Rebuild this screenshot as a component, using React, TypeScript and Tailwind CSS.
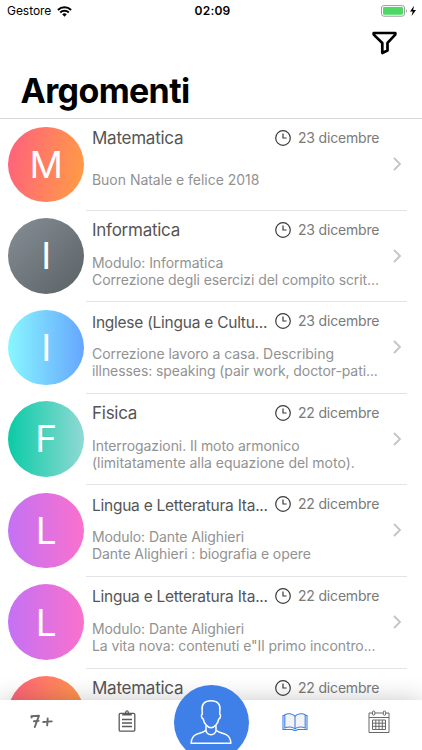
import { clsx } from "clsx";

interface Topic {
  title: string;
  titleClass: string;
  date: string;
  lines: { text: string; tracking: string }[];
  gradient: string;
}

const BIG_TITLE = "text-[17px] tracking-[-0.25px]";
const SMALL_TITLE = "text-[15.5px] tracking-[-0.25px]";

const TOPICS: Topic[] = [
  {
    title: "Matematica",
    titleClass: BIG_TITLE,
    date: "23 dicembre",
    lines: [{ text: "Buon Natale e felice 2018", tracking: "tracking-[-0.03px]" }],
    gradient: "bg-linear-[100deg,#ff5f7e,#ff9f43]",
  },
  {
    title: "Informatica",
    titleClass: BIG_TITLE,
    date: "23 dicembre",
    lines: [
      { text: "Modulo: Informatica", tracking: "tracking-[-0.06px]" },
      { text: "Correzione degli esercizi del compito scrit...", tracking: "tracking-[-0.08px]" },
    ],
    gradient: "bg-linear-[135deg,#868f96,#596164]",
  },
  {
    title: "Inglese (Lingua e Cultu...",
    titleClass: SMALL_TITLE,
    date: "23 dicembre",
    lines: [
      { text: "Correzione lavoro a casa. Describing", tracking: "tracking-[-0.05px]" },
      { text: "illnesses: speaking (pair work, doctor-pati...", tracking: "tracking-[-0.08px]" },
    ],
    gradient: "bg-linear-[90deg,#89f7fe,#66a6ff]",
  },
  {
    title: "Fisica",
    titleClass: BIG_TITLE,
    date: "22 dicembre",
    lines: [
      { text: "Interrogazioni. Il moto armonico", tracking: "tracking-[-0.07px]" },
      { text: "(limitatamente alla equazione del moto).", tracking: "tracking-[-0.02px]" },
    ],
    gradient: "bg-linear-[90deg,#0acba6,#90d9d4]",
  },
  {
    title: "Lingua e Letteratura Ita...",
    titleClass: SMALL_TITLE,
    date: "22 dicembre",
    lines: [
      { text: "Modulo: Dante Alighieri", tracking: "tracking-[-0.09px]" },
      { text: "Dante Alighieri : biografia e opere", tracking: "tracking-[-0.07px]" },
    ],
    gradient: "bg-linear-[90deg,#c471f5,#fa71cd]",
  },
  {
    title: "Lingua e Letteratura Ita...",
    titleClass: SMALL_TITLE,
    date: "22 dicembre",
    lines: [
      { text: "Modulo: Dante Alighieri", tracking: "tracking-[-0.09px]" },
      { text: "La vita nova: contenuti e\"Il primo incontro...", tracking: "tracking-[-0.08px]" },
    ],
    gradient: "bg-linear-[90deg,#c471f5,#fa71cd]",
  },
  {
    title: "Matematica",
    titleClass: BIG_TITLE,
    date: "22 dicembre",
    lines: [],
    gradient: "bg-linear-[100deg,#ff5f7e,#ff9f43]",
  },
];

function ClockIcon() {
  return (
    <svg className="shrink-0" width="16" height="16" viewBox="0 0 16 16" fill="none" stroke="#3a3a3c" strokeWidth="1.2">
      <circle cx="8" cy="8" r="7.3" />
      <path d="M8 3.4V8h3.6" />
    </svg>
  );
}

function StatusBar() {
  return (
    <div className="h-[22px] flex items-center text-black">
      <div className="flex-1 flex items-center gap-[6px] pl-[7px]">
        <span className="text-[12px] tracking-[-0.05px]">Gestore</span>
        <svg width="15" height="11" viewBox="0 0 15 11" fill="none" stroke="#000" strokeWidth="1.9">
          <path d="M0.9 4a9.4 9.4 0 0 1 13.2 0" />
          <path d="M3.2 6.5a6.1 6.1 0 0 1 8.6 0" />
          <path d="M7.5 10.7L5.2 8.3a3.3 3.3 0 0 1 4.6 0z" fill="#000" stroke="none" />
        </svg>
      </div>
      <span className="pl-[1px] text-[12px] font-semibold tracking-[0.2px]">02:09</span>
      <div className="flex-1 flex items-center justify-end pr-[5px]">
        <svg width="36" height="12" viewBox="0 0 36 12">
          <rect x="0.5" y="0.6" width="23" height="10.6" rx="2.4" fill="none" stroke="#9b9b9b" />
          <rect x="2" y="2.1" width="20" height="7.6" rx="1.2" fill="#4cd964" />
          <path d="M25 4.2c1.2.5 1.2 3 0 3.5z" fill="#9b9b9b" />
          <path d="M33 0.8L29 6.6h2.7L30.6 11l4.4-5.9h-2.8z" fill="#000" />
        </svg>
      </div>
    </div>
  );
}

function TopicRow({ topic }: { topic: Topic }) {
  return (
    <div className="h-[91.6px] shrink-0 flex pl-[8.3px]">
      <div
        className={clsx(
          "mt-[7.5px] size-[75.6px] rounded-full flex items-center justify-center text-white text-[37px] shrink-0",
          topic.gradient,
        )}
      >
        {topic.title[0]}
      </div>
      <div className="ml-[2.6px] w-[321px] shrink-0 flex border-b border-[#e4e4e6] pl-[5.5px]">
        <div className="w-[288px] shrink-0 flex flex-col">
          <div className="mt-[8px] h-[22px] flex items-center">
            <span className={clsx("w-[183px] shrink-0 pt-[2px] whitespace-nowrap text-[#555]", topic.titleClass)}>
              {topic.title}
            </span>
            <span className="flex items-center gap-[7px] text-[14px] tracking-[-0.18px] text-[#7a7a7a]">
              <ClockIcon />
              <span className="whitespace-nowrap pb-[1px]">{topic.date}</span>
            </span>
          </div>
          <div className="mt-[13px] h-[34px] flex flex-col justify-center text-[14px] leading-[17px] text-[#929292]">
            {topic.lines.map((line) => (
              <span key={line.text} className={clsx("whitespace-nowrap", line.tracking)}>
                {line.text}
              </span>
            ))}
          </div>
        </div>
        <svg className="ml-[13px] mt-[38px]" width="9" height="14" viewBox="0 0 9 14" fill="none" stroke="#c4c4c8" strokeWidth="1.8">
          <path d="M1 1l6 6-6 6" />
        </svg>
      </div>
    </div>
  );
}

function TabBar() {
  return (
    <div className="relative h-[50px] shrink-0 bg-white shadow-[0_0_24px_rgba(0,0,0,0.22)] grid grid-cols-5 justify-items-center">
      <svg className="mt-[14px]" width="24" height="16" viewBox="0 0 24 16" fill="none" stroke="#686868" strokeWidth="1.9" strokeLinecap="round" strokeLinejoin="round">
        <path d="M1.4 2.2l.2 1.4M1.4 2.3L9 1.7 4.8 13M4 7.3l4.600-.4M13.200 8l8.600-.6M17.700 4.400l-.5 7" />
      </svg>
      <svg className="mt-[10px]" width="18" height="22" viewBox="0 0 18 22" fill="none" stroke="#5a5a5a" strokeWidth="1.3">
        <rect x="1.2" y="3.4" width="15.6" height="17.8" rx="1.2" />
        <path
          d="M4.2 5.400V3.100h2.700C7.100 1.300 8 .3 9 .3s1.900 1 2.100 2.800h2.700v2.300zM9 1.500a.8.8 0 1 0 0 1.600.8.8 0 0 0 0-1.600z"
          fill="#5a5a5a"
          fillRule="evenodd"
          stroke="none"
        />
        <path d="M4 9.500h10M4 13h10M4 16.500h10" strokeWidth="1.5" />
      </svg>
      <svg className="col-start-4 mt-[13px] mr-[1px]" width="26" height="19" viewBox="0 0 26 19" fill="none" stroke="#3f7fe8" strokeWidth="1.1">
        <path d="M2.800 1.700C5 .2 11 .3 13 3.400 15 .3 21 .2 23.200 1.700V15H2.800z" fill="#f3f3f3" stroke="none" />
        <path d="M13 3.400C11 .3 5 .2 2.800 1.700V15c3-1.400 8-1.400 10.200 1 2.200-2.400 7.200-2.400 10.200-1V1.700C21 .2 15 .3 13 3.400V16M2.800 2.500H1v14h9.500c.6 1.300 4.400 1.300 5 0H25v-14h-1.800" />
      </svg>
      <svg className="mt-[10px] mr-[2px]" width="22" height="24" viewBox="0 0 22 24" fill="none" stroke="#686868" strokeWidth="1">
        <path d="M4.300 3H1v19.500h20V3h-3.200M7 3h8.200M1 7.500h20" />
        <rect x="4.500" y="1" width="2.300" height="4.200" rx="1.100" />
        <rect x="15.300" y="1" width="2.300" height="4.200" rx="1.100" />
        <path d="M4.500 10h13v9.500h-13zM4.500 13.200h13M4.500 16.300h13M7.800 10v9.500M11 10v9.500M14.300 10v9.500" />
      </svg>
      {/* profile button rises above the bar and runs off the screen */}
      <div className="absolute left-[173.5px] top-[-15px] h-[65px] w-[75px] overflow-hidden">
        <div className="size-[75px] rounded-full bg-[#3f7fe8]">
          <svg width="75" height="75" viewBox="0 0 75 75" fill="none" stroke="#fff" strokeWidth="1.5" strokeLinejoin="round">
            <path d="M37 15.700c-6.500 0-9.700 3.600-8.900 9.600l.2 4c-1.500.3-.9 4 .9 4.700.9 4.500 4.200 8.800 7.800 8.800s6.900-4.300 7.800-8.800c1.800-.7 2.400-4.400.9-4.700l.2-4c.8-6-2.400-9.600-8.900-9.600z" />
            <path d="M32 40.500v4.200c-.3 2.300-6 3-9.700 4.700-4 1.800-5 4.600-5.200 8.900h39.800c-.2-4.300-1.200-7.100-5.200-8.900-3.700-1.700-9.400-2.400-9.700-4.700v-4.200M32 44.700c-.2 6.800 10.200 6.800 10 0" />
          </svg>
        </div>
      </div>
    </div>
  );
}

export default function App() {
  return (
    <div className="w-[422px] h-[750px] overflow-hidden bg-white flex flex-col font-['Inter',sans-serif]">
      <header className="h-[119px] shrink-0 flex flex-col border-b border-[#d8d8da]">
        <StatusBar />
        <div className="h-[44px] flex justify-end pr-[25px] pt-[9px]">
          <svg width="25" height="24" viewBox="0 0 25 24" fill="none" stroke="#000" strokeWidth="2.7" strokeLinejoin="round">
            <path d="M1.700 2h21.600v1.600l-7.800 8.300v7.600L10.300 22v-10L1.700 3.600z" />
          </svg>
        </div>
        <h1 className="pl-[20.5px] pt-[1px] text-[34px] leading-[48px] font-bold text-black tracking-[-0.65px]">
          Argomenti
        </h1>
      </header>
      <main className="flex-1 min-h-0 overflow-hidden flex flex-col">
        {TOPICS.map((topic, i) => (
          <TopicRow key={i} topic={topic} />
        ))}
      </main>
      <TabBar />
    </div>
  );
}
